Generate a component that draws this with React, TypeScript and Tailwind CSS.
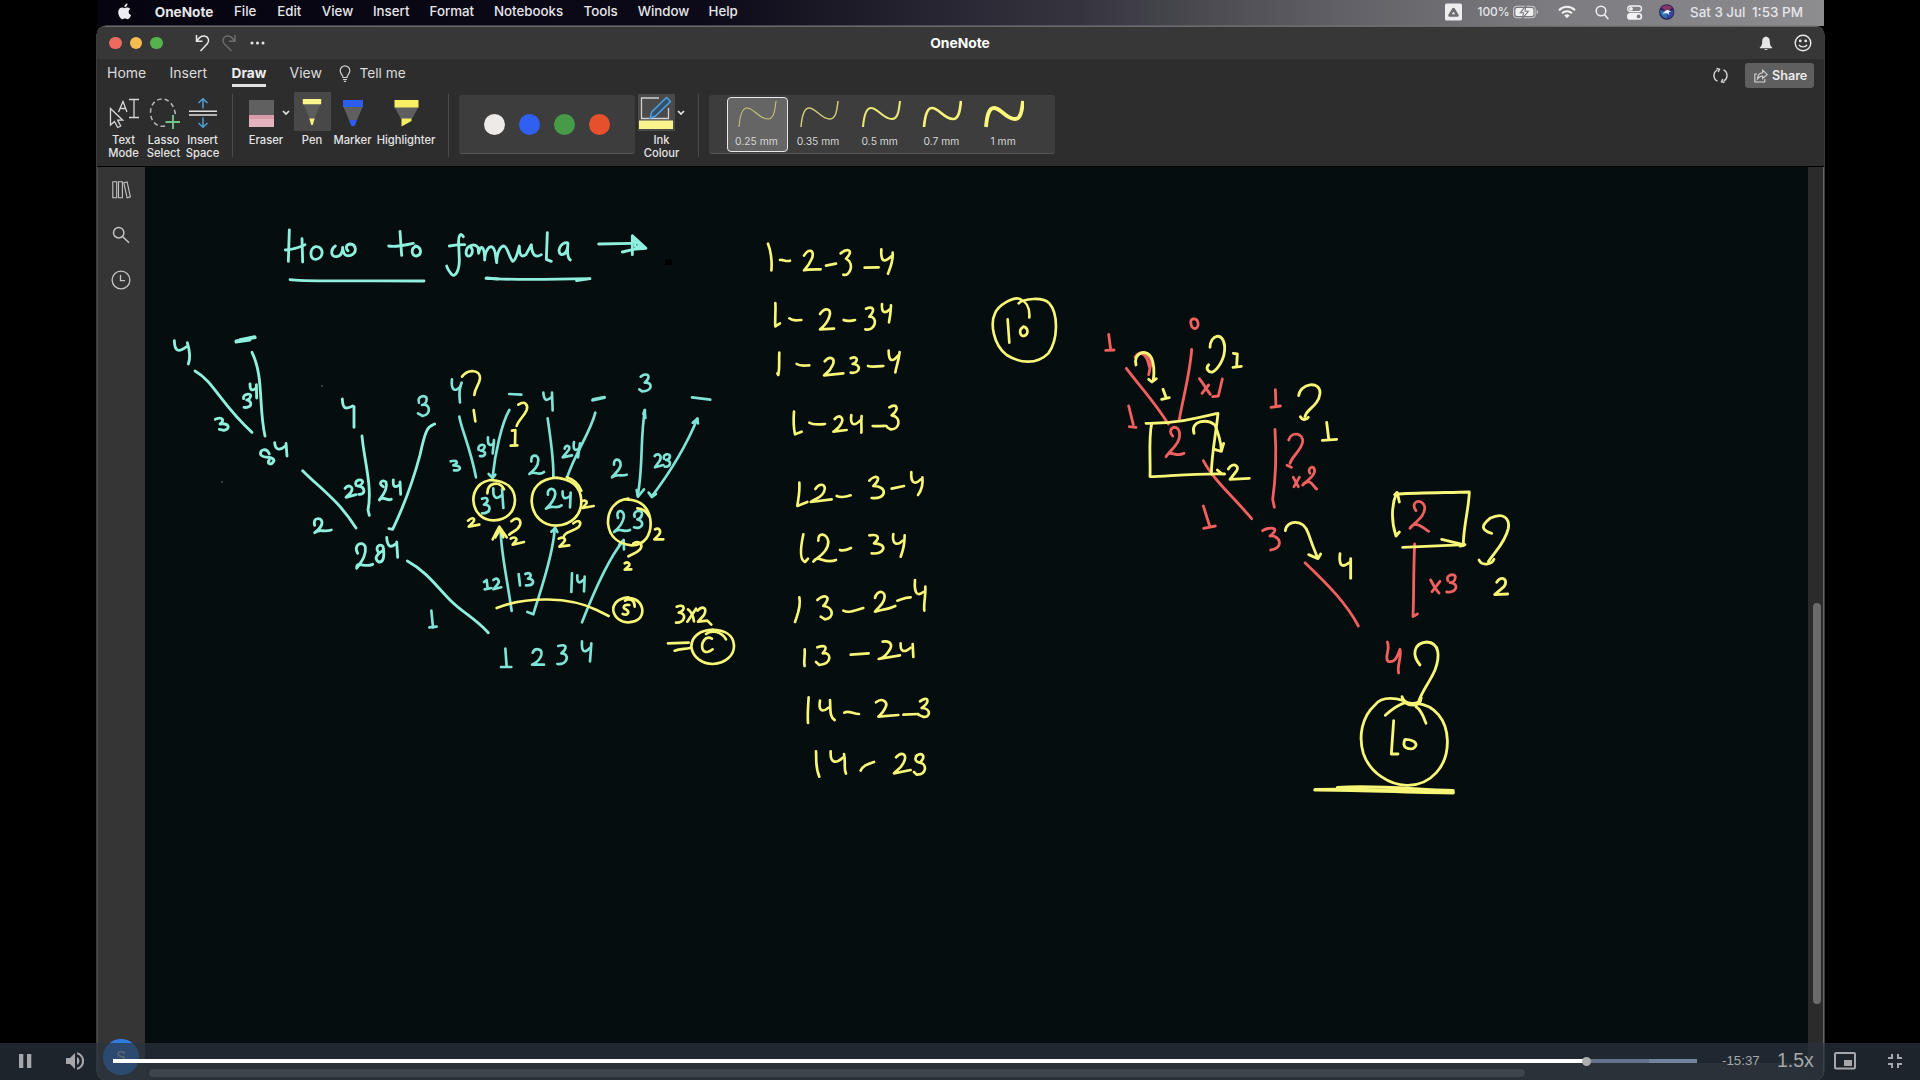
import React from "react";

const MINT = "#8ff0de";
const TEAL = "#7fe3d6";
const YELLOW = "#f8f677";
const RED = "#f0605f";

type InkGroup = { label: string; x: number; y: number; color: string; width: number; d: string[] };

/* Pen strokes of the note, three units to a pixel, grouped by the place where they were written. */
const INK: InkGroup[] = [
  {
    label: "How to formula",
    x: 270, y: 210, color: MINT, width: 8.5,
    d: [
      "M58 60L55 154", "M46 120Q75 118 105 104", "M96 86L98 156",
      "M137 110C118 114 118 150 138 148C160 146 164 112 140 110",
      "M196 108C180 118 182 142 200 140C214 138 218 125 218 112C220 135 228 140 242 136C262 128 260 104 240 102C228 104 226 114 234 122",
      "M390 64L395 136", "M356 108C380 112 410 104 430 100",
      "M436 110C422 115 424 140 440 138C456 135 456 112 436 108",
      "M580 80C572 64 564 80 566 100L568 150C568 180 556 206 544 192C536 182 532 176 530 168", "M538 108C550 106 570 104 584 104",
      "M592 114C584 130 590 144 602 136C612 124 606 110 596 110C606 104 616 102 624 112L626 130C632 100 644 108 644 150C645 118 660 105 668 112C678 120 676 140 680 158C680 130 690 108 702 108C714 112 716 140 728 154C740 150 744 120 748 108C748 140 756 142 768 134L784 104C786 138 798 144 814 134",
      "M832 68L829 148L844 154",
      "M892 98C870 98 860 125 874 134C890 136 894 110 894 100C892 120 892 145 901 150",
      "M986 102L1085 100", "M1087 78L1087 134", "M1088 78L1128 115L1088 118", "M1088 119L1057 126", "M1092 88L1096 110L1116 110L1098 96",
      "M60 209C100 216 200 211 462 213", "M648 205C720 210 860 208 960 206L920 212", "M650 204L684 207",
    ],
  },
  {
    label: "left branch: 4, 3, 34, 2, 234",
    x: 90, y: 160, color: MINT, width: 8.5,
    d: [
      "M253 542C254 575 265 578 290 560", "M292 548C300 575 302 595 295 612",
      "M438 543L496 533", "M438 546L480 540", "M450 539L494 530",
      "M486 577C522 650 505 740 525 828",
      "M315 633C372 665 390 730 486 817",
      "M461 716C456 702 484 698 482 708C480 716 476 720 470 720C490 725 485 745 462 742", "M480 672C480 692 486 694 498 684", "M499 674L500 714",
      "M376 778C398 768 405 782 390 792C415 788 425 805 402 811L388 808",
      "M538 882C530 862 508 868 512 884C520 898 550 885 552 902C545 918 528 912 538 900",
      "M554 848C556 872 570 872 586 858", "M588 850L591 888",
      "M638 932C690 985 745 1020 798 1104",
      "M674 1096C668 1073 692 1070 696 1085C698 1100 685 1110 674 1118C690 1105 700 1118 724 1110",
      "M757 717C758 745 765 750 788 738", "M792 740L792 802",
      "M816 828C822 900 848 980 834 1050L838 1066",
      "M765 985C775 972 795 980 782 998L768 1012L798 1004", "M798 976C790 960 818 954 818 966C816 974 808 978 803 978C827 980 828 1005 806 1003",
      "M880 980C862 972 876 955 888 966C895 985 880 1005 868 1020C880 1005 890 1025 904 1018", "M910 960C908 980 914 984 926 976", "M930 966L932 1003",
      "M897 1106L908 1108C950 1020 970 960 990 885C1008 800 1015 800 1034 792",
      "M803 1180C790 1155 815 1140 826 1160C830 1190 810 1210 800 1225C800 1200 820 1225 848 1213",
      "M864 1175C852 1155 880 1148 880 1165C884 1190 880 1208 866 1206C850 1195 862 1182 878 1172",
      "M890 1132C892 1158 900 1165 915 1153", "M920 1146L923 1192",
      "M952 1203C1010 1235 1040 1280 1080 1320C1120 1360 1150 1370 1195 1418",
    ],
  },
  {
    label: "tree of 1234",
    x: 410, y: 350, color: TEAL, width: 8,
    d: [
      "M27 158C18 138 50 132 50 146C50 158 42 164 36 165C62 158 64 195 38 198L24 190",
      "M126 88C122 118 135 130 152 108", "M155 98C145 120 148 140 150 157",
      "M148 200C155 240 180 290 198 382", "M298 132L334 134", "M298 180C275 220 255 310 248 380", "M236 372L248 384L256 374",
      "M206 299C200 284 226 280 224 291C222 298 216 302 212 302C232 302 228 322 210 318", "M234 262C232 286 240 290 252 280", "M252 270L248 310",
      "M122 334C145 328 145 340 130 346C158 346 154 364 132 361",
      "M400 128C402 150 408 156 424 142", "M426 128L428 181", "M547 151L584 143", "M549 148L583 141",
      "M413 205C422 270 432 330 430 382", "M556 188C540 250 500 300 472 380",
      "M364 334C362 312 385 312 385 330C385 350 370 362 358 372C375 360 385 380 402 366",
      "M464 296C466 283 484 286 476 300L458 322L486 316", "M492 276C488 300 496 305 508 294", "M510 280L504 322",
      "M692 80C710 65 728 78 704 98C730 95 728 125 696 124L688 118", "M846 142L901 149",
      "M705 180C690 260 700 350 683 437", "M700 192L704 180L706 204", "M680 420L684 440L702 418",
      "M848 218L862 206C840 260 800 340 725 440L716 428", "M862 206L864 220", "M726 441L738 432",
      "M612 344C610 322 632 325 632 345C630 360 615 370 606 382C620 370 632 380 650 374",
      "M734 318C745 306 758 318 748 334L735 352L760 345", "M762 326C756 312 782 308 780 320C778 328 772 330 768 330C787 332 782 352 764 350",
      "M216 446C235 438 238 455 222 464C245 462 245 490 216 490", "M250 415C248 445 260 450 275 436", "M276 418L280 474",
      "M414 434C410 412 436 410 436 432C434 450 420 465 408 476C425 462 440 480 455 466", "M458 424C456 445 465 450 480 438", "M482 428L480 472",
      "M624 504C615 480 640 475 642 498C640 520 625 535 612 546C630 530 640 550 660 540", "M674 500C666 482 698 476 696 492C694 504 688 507 682 508C705 512 700 540 672 532",
      "M272 540C272 600 290 680 305 783", "M434 536C430 620 385 740 370 793L352 786", "M424 545L436 534L442 546",
      "M640 572C600 620 550 730 516 817", "M628 584L641 570L642 598",
      "M222 696L230 690L233 716", "M224 718L244 714", "M250 690C262 680 272 692 262 704L250 718L274 712",
      "M326 672L330 706", "M346 672C362 664 368 678 354 686C378 688 372 708 348 706",
      "M486 670L484 726", "M502 676C500 700 508 702 520 690", "M524 680L522 724",
      "M64 782L69 832", "M58 832L80 830", "M286 896L290 950", "M273 951L304 951",
      "M368 908C375 892 398 895 394 915C390 930 375 940 366 944L402 944",
      "M445 888C472 880 472 895 454 910C480 910 474 945 442 942",
      "M516 874C514 905 522 912 540 894", "M544 880L540 934",
    ],
  },
  {
    label: "counts around the tree",
    x: 410, y: 350, color: YELLOW, width: 8,
    d: [
      "M156 80C175 55 212 60 210 85C208 105 194 115 193 135", "M191 180L196 214",
      "M325 164C345 150 355 165 350 180C342 200 325 210 320 228", "M306 242L316 240L315 286", "M302 287L322 286",
      "M250 390C210 390 190 420 190 450C192 490 220 512 252 511C290 510 315 485 315 450C314 415 290 392 240 390", "M232 430C232 398 268 390 282 418",
      "M442 383C390 385 364 415 365 455C368 500 400 527 438 527C485 525 515 495 514 452C512 410 485 385 430 383", "M470 382C490 388 505 400 514 422",
      "M655 446C615 450 593 480 594 520C598 560 625 582 665 586C705 585 722 555 722 520C720 475 695 448 645 448", "M682 475C700 475 710 485 718 500",
      "M174 512C190 498 198 508 188 518L176 530L208 524",
      "M304 514C320 498 335 508 330 525C322 545 308 542 298 554", "M248 568C255 555 262 540 268 530L290 562", "M256 562L270 538L280 562",
      "M302 566C315 558 325 566 316 574L308 584L342 576",
      "M516 453C528 448 535 458 526 464L518 474L551 468",
      "M490 520C508 505 517 518 505 532C490 545 465 545 462 558", "M446 566C462 558 470 568 460 578L448 590L478 586",
      "M735 538C748 530 756 545 745 556L733 568L760 568",
      "M670 580C690 570 700 585 690 598C680 610 665 612 655 619", "M644 640C655 632 664 645 654 650L644 659L664 658",
      "M260 774C350 738 480 740 560 780L596 798",
      "M655 742C620 745 608 765 610 782C615 808 640 818 655 817C685 815 698 800 697 780C694 755 675 742 640 744", "M645 752C660 742 675 752 674 770",
      "M658 765C640 762 636 774 648 778C660 785 655 798 638 792",
      "M800 770C825 760 828 780 806 788C832 788 825 820 798 818", "M834 778C845 785 850 800 852 814", "M858 776L832 815", "M862 782C880 765 892 775 882 795L864 815L892 812L904 824",
      "M774 880L836 878", "M794 902C810 895 825 898 840 894",
      "M915 840C870 838 844 860 844 890C848 925 880 942 908 942C948 940 973 915 972 886C970 855 945 838 900 840", "M888 852C905 838 935 845 948 868",
      "M906 866C885 855 872 880 878 898C885 912 900 905 908 898",
    ],
  },
  {
    label: "1-2-3-4, 1-2-34, 1-23-4, 1-24-3 and 10",
    x: 740, y: 230, color: YELLOW, width: 8,
    d: [
      "M84 41C92 60 97 95 94 121", "M120 90C130 88 138 96 150 92", "M192 77C205 55 225 58 216 85C208 105 198 115 192 121C205 117 225 118 242 118", "M258 107L288 101", "M302 70C325 52 342 62 318 86C345 100 330 140 310 134", "M374 113L416 112", "M424 58C422 92 430 102 455 78", "M458 68C460 95 450 115 444 131",
      "M106 219C108 245 104 265 106 289L120 280", "M148 265C160 275 170 270 184 270", "M240 252C255 230 277 235 268 260C260 285 248 290 240 298L282 296", "M311 270C322 276 334 272 345 270", "M378 236C400 226 407 240 388 260C415 258 408 305 376 298", "M426 222C424 250 435 252 450 238", "M453 226C452 250 450 262 447 277",
      "M118 368C116 395 120 410 115 435L112 430", "M170 402C182 410 195 406 208 406", "M254 394C270 375 287 385 278 405C270 425 258 430 252 436L310 430", "M332 385C355 375 355 395 338 402C365 402 362 432 332 428", "M384 408C395 412 410 410 430 408", "M446 362C446 392 455 400 475 376", "M479 366C475 400 468 410 466 427",
      "M162 545C160 570 160 590 165 613L185 605", "M208 578C220 586 235 584 255 582", "M284 567C298 552 313 562 304 580C298 595 286 600 280 605L320 600", "M334 555C330 582 340 592 360 572", "M365 558C362 580 366 595 364 608", "M398 588C410 590 425 587 440 588", "M448 532C470 518 480 535 455 556C485 560 480 600 452 598L442 592",
      "M836 220C850 205 910 200 928 220C955 250 955 330 925 370C890 405 840 400 800 375C760 345 750 280 765 250C775 225 820 200 838 206C860 215 870 230 868 262",
      "M803 268L808 338", "M848 292C835 300 840 318 852 318C868 312 864 292 850 290",
    ],
  },
  {
    label: "12-3-4, 12-34, 13-2-4, 13-24, 14-2-3, 14-23",
    x: 740, y: 460, color: YELLOW, width: 8,
    d: [
      "M178 68C180 95 175 115 172 138L202 126", "M226 87C240 65 262 75 252 95C245 115 225 115 212 126L275 118", "M290 108C305 114 315 112 332 106", "M388 62C405 42 430 50 400 78C445 78 440 120 395 114", "M455 86L492 78", "M514 36C512 62 520 80 542 58", "M547 52C550 75 545 90 534 105",
      "M190 223C182 260 178 300 195 306L204 296", "M235 242C232 215 262 220 265 245C265 275 235 290 220 305C235 280 250 315 288 300", "M300 270C310 274 320 270 333 264", "M388 226C415 222 422 232 402 250C445 250 435 285 395 280", "M460 222C455 250 470 260 488 242", "M494 226C494 260 488 275 482 290",
      "M178 412C184 440 172 465 165 486", "M232 420C255 400 277 410 250 438C280 440 285 475 255 478L242 470", "M310 452C325 460 345 452 370 444", "M405 414C410 388 442 390 432 420C425 440 410 445 405 455C420 450 445 448 466 438", "M472 422C485 418 495 412 512 412", "M525 360C522 397 530 412 550 396", "M556 380C558 410 550 430 553 452",
      "M194 568C196 590 190 605 194 618", "M232 562C257 553 264 562 248 580C275 575 278 610 238 615L228 606", "M332 584L386 580", "M428 545C450 540 462 555 445 575C435 590 425 595 416 597L480 586", "M482 550C480 575 492 580 512 563", "M518 552L520 591",
      "M206 712C204 740 202 765 204 789", "M240 722C235 750 245 760 265 743", "M270 720C272 750 268 770 284 780", "M313 758C325 750 340 762 357 762", "M408 727C425 712 447 725 435 745C428 760 420 765 415 770L475 765", "M490 764L535 762", "M540 724C565 705 572 725 545 744C575 745 572 775 548 770L535 764",
      "M228 874C230 900 225 920 238 950", "M272 874C270 907 285 914 308 893", "M312 882C318 910 310 925 318 941", "M362 932C370 915 385 912 402 906", "M468 892C485 873 502 882 492 905C485 925 470 930 462 940L512 930", "M528 888C545 874 560 888 540 908C562 912 560 945 530 944L522 936", "M530 888C522 898 528 906 540 908",
    ],
  },
  {
    label: "call tree, upper part",
    x: 1080, y: 300, color: RED, width: 8.5,
    d: [
      "M338 57C328 60 332 85 345 86C360 82 356 54 340 57", "M86 103L92 148", "M77 151L102 150",
      "M139 205C180 260 220 300 265 372", "M335 148C330 220 310 290 298 358", "M165 172C180 148 212 160 213 190L206 224", "M185 160C200 168 204 180 208 200",
      "M146 318L160 374", "M148 380L168 382", "M358 236C370 250 380 270 391 283", "M386 255L366 280", "M427 237L415 288L398 290",
      "M586 269L588 320", "M573 322L601 318", "M626 420C635 392 670 400 668 425C665 450 635 470 630 490", "M621 496L634 502",
      "M585 388C590 470 585 550 578 598L583 622", "M640 532L655 560", "M658 532L642 560",
      "M690 520C680 505 702 492 704 512C705 530 675 545 668 555C690 530 700 560 710 567",
      "M278 408C258 388 290 368 298 395C305 430 270 450 258 470C270 445 285 475 312 460",
      "M370 482C400 540 460 590 515 656", "M370 618L388 675", "M371 685L406 678",
      "M548 692C565 680 607 680 570 708C602 705 612 745 572 750",
    ],
  },
  {
    label: "returned values, upper part",
    x: 1080, y: 300, color: YELLOW, width: 8.5,
    d: [
      "M168 195C158 160 200 142 215 175C225 200 222 225 220 240", "M206 238L216 246L229 236", "M249 268L258 292", "M245 298L268 293",
      "M390 142C390 105 430 92 434 140C436 180 410 210 398 216C385 218 375 205 386 194", "M460 160L472 162L470 196", "M459 202L484 199",
      "M215 370C205 420 212 480 210 530C270 528 350 520 434 522", "M198 370C280 372 350 355 414 340C408 400 395 460 394 522",
      "M342 400C330 362 380 355 405 375C415 400 422 425 424 448", "M403 448L424 454L431 430",
      "M445 507C460 483 482 500 468 515L450 538L508 535", "M412 510L424 520",
      "M656 287C660 250 722 240 720 280C715 320 680 325 675 350", "M661 350C667 362 680 360 685 352", "M740 367L746 416", "M727 421L770 418",
      "M616 692C620 660 670 655 685 700C695 730 705 755 712 772", "M686 764L714 776L722 762",
    ],
  },
  {
    label: "call tree, lower part",
    x: 1280, y: 460, color: RED, width: 8.5,
    d: [
      "M75 308C140 370 200 430 235 498", "M408 152C388 125 425 112 434 140C438 170 400 190 390 205C405 180 425 200 446 214",
      "M404 252C400 330 402 400 399 470L412 462", "M452 360C460 375 468 390 477 399", "M480 364L456 395", "M504 362C494 346 524 338 526 350C526 362 518 368 510 368C540 370 530 400 500 396",
      "M322 546C332 570 312 590 324 604C345 610 352 590 360 568C365 595 350 620 356 639",
    ],
  },
  {
    label: "returned values, lower part",
    x: 1280, y: 460, color: YELLOW, width: 8.5,
    d: [
      "M180 281C176 317 185 325 208 308", "M212 296L212 355",
      "M350 98C332 140 335 190 348 228L358 216", "M344 104L352 98L358 126", "M356 102C420 98 500 98 568 96C566 150 550 200 550 255", "M368 262L555 254", "M540 258L552 256", "M485 238L550 254",
      "M635 220C600 210 605 195 630 175C670 155 690 175 685 205C675 250 640 280 625 305", "M597 300C605 318 635 315 642 298",
      "M650 367C665 343 687 360 672 380L644 404L683 402",
      "M420 615C395 585 400 550 440 546C480 548 480 590 465 630C450 665 425 695 416 725",
      "M366 710C375 735 415 738 424 714", "M368 718C380 740 415 740 422 722",
      "M372 722C330 710 300 715 285 735C245 770 235 830 250 880C270 940 330 975 380 976C450 978 505 920 502 840C500 780 465 735 410 730",
      "M316 766C335 748 355 735 375 728", "M408 740C425 750 430 770 438 790",
      "M341 782L334 882L354 882", "M374 840C366 862 380 868 398 866C415 858 412 840 376 838",
      "M104 990C200 989 400 999 520 999", "M172 982C300 975 400 988 520 991", "M106 988C250 984 400 993 520 996",
    ],
  },
];

const Ink = () => (
  <svg className="block h-full w-full" viewBox="145 167 1663 913" fill="none" strokeLinecap="round" strokeLinejoin="round">
    {INK.map((g) => (
      <g key={g.label} aria-label={g.label} transform={`translate(${g.x} ${g.y}) scale(0.33333)`} stroke={g.color} strokeWidth={g.width}>
        {g.d.map((d) => <path key={d} d={d} />)}
      </g>
    ))}
    <rect x="665" y="259" width="7" height="6" fill="#000" />
    <circle cx="322" cy="386" r="0.8" fill="#6d8c88" />
    <circle cx="222" cy="482" r="0.8" fill="#6d8c88" />
  </svg>
);

const MENUS = [
  { t: "OneNote", c: "w-[79.3px] font-bold text-[13.6px]" },
  { t: "File", c: "w-[43.3px]" },
  { t: "Edit", c: "w-[44.5px]" },
  { t: "View", c: "w-[51.2px]" },
  { t: "Insert", c: "w-[56.6px]" },
  { t: "Format", c: "w-[64.4px]" },
  { t: "Notebooks", c: "w-[89.6px]" },
  { t: "Tools", c: "w-[54.1px]" },
  { t: "Window", c: "w-[70.9px]" },
  { t: "Help", c: "w-[40px]" },
];

const MenuBar = () => (
  <div className="flex h-[26px] items-center whitespace-nowrap bg-[linear-gradient(90deg,#06040f_0%,#0c0a18_35%,#24222e_47%,#36353f_57%,#4a4a50_64%,#606066_72%,#7b7b80_84%,#8d8d90_100%)] pb-[2px] pl-[20px] text-[13.3px] font-medium text-[#e6e6ea]">
    <svg className="-mt-px h-[17px] w-[37.7px] shrink-0" viewBox="0 0 37.7 17" fill="#ececf2">
      <path d="M11.6 9c0-2 1.5-2.900 1.700-3-1-1.400-2.400-1.500-2.900-1.500-1.200-.1-2.300.7-2.900.7s-1.500-.7-2.500-.7C3.700 4.500 2.500 5.300 1.900 6.400.500 8.700 1.500 12.300 2.900 14.200c.7 1 1.500 2.100 2.500 2 1-.04 1.400-.65 2.600-.65s1.600.65 2.600.63c1.100 0 1.800-1 2.400-1.900.8-1.100 1.100-2.200 1.100-2.200s-2.500-.900-2.500-3.080zM9.700 3.100C10.200 2.400 10.600 1.500 10.500.5c-.8 0-1.700.5-2.300 1.200-.500.6-.900 1.500-.800 2.400.900.1 1.800-.400 2.300-1z" />
    </svg>
    {MENUS.map((m) => (
      <span key={m.t} className={"block shrink-0 " + m.c}>{m.t}</span>
    ))}
    <div className="ml-auto mr-px flex h-full items-center">
      <svg className="h-[18px] w-[33px]" viewBox="0 0 33 18">
        <rect width="17" height="17" y=".5" rx="1.500" fill="#ededf0" />
        <path d="M8.500 6L12.500 12.500H4.500Z" fill="none" stroke="#6c6c72" strokeWidth="2.600" strokeLinejoin="round" />
      </svg>
      <span className="block w-[35px] text-[12px] tracking-[-0.1px]">100%</span>
      <svg className="h-[14px] w-[45px]" viewBox="0 0 45 14">
        <rect x=".6" y="1.300" width="21.500" height="11.400" rx="3.200" fill="none" stroke="#c9c9cd" strokeWidth="1.100" />
        <rect x="2.400" y="3.100" width="18" height="7.800" rx="1.600" fill="#f0f0f3" />
        <path d="M23.600 5v4c1-.3 1.500-1 1.500-2s-.5-1.700-1.500-2z" fill="#c9c9cd" />
        <path d="M13 .6L7.300 7.800h3.200L9.500 13.400 15.300 6.300h-3.300z" fill="#f4f4f6" stroke="#77777d" strokeWidth="1.100" />
      </svg>
      <svg className="h-[14px] w-[37px]" viewBox="0 0 37 14" fill="none" stroke="#f2f2f4" strokeWidth="2">
        <path d="M1 5.200C5.500.7 12.500.7 17 5.200M4 8.200c2.800-2.700 7.200-2.700 10 0" /><path d="M9 13.200L6.300 10.500a3.900 3.900 0 0 1 5.400 0z" fill="#f2f2f4" stroke="none" />
      </svg>
      <svg className="h-[15px] w-[32px]" viewBox="0 0 32 15" fill="none" stroke="#f0f0f2" strokeWidth="1.500" strokeLinecap="round"><circle cx="6" cy="6" r="4.800" /><path d="M9.600 9.800L13 13.700" /></svg>
      <svg className="h-[15px] w-[32px]" viewBox="0 0 32 15">
        <rect x=".7" y="1" width="13.800" height="5.600" rx="2.800" fill="none" stroke="#f2f2f4" strokeWidth="1.300" /><circle cx="4" cy="3.800" r="1.900" fill="#f2f2f4" />
        <rect x="0" y="8" width="15.200" height="6.800" rx="3.400" fill="#f2f2f4" /><circle cx="11.600" cy="11.400" r="1.900" fill="#77777c" />
      </svg>
      <svg className="h-[16px] w-[31.5px]" viewBox="0 0 31.500 16">
        <circle cx="7.700" cy="8" r="7.700" fill="#2a2455" />
        <path d="M2.500 3.500C5 .5 11 .5 13 4L8 8z" fill="#8a3568" /><path d="M1 6c0 5 3 8 7 8.500L8 8z" fill="#2a6fb8" /><path d="M14.500 6c.5 5-2 8-6 8.500L8 8z" fill="#3348a0" />
        <path d="M3.500 10.500C6 5.500 9 4.500 12.500 8 10 7.200 9 8.500 10.500 11.500 8 8.500 6 9 3.500 10.500z" fill="#dff3ff" />
      </svg>
      <span className="block w-[62px] text-[13.400px]">Sat 3 Jul</span>
      <span className="block w-[71px] text-[13.500px]">1:53 PM</span>
    </div>
  </div>
);

const TitleBar = () => (
  <div className="flex h-[32px] items-center bg-[#373737]">
    <div className="flex w-[400px] items-center pl-[12px]">
      <div className="flex gap-[8px]">
        <i className="h-[12.500px] w-[12.500px] rounded-full bg-[#ee6a5f]" />
        <i className="h-[12.500px] w-[12.500px] rounded-full bg-[#f5bd4f]" />
        <i className="h-[12.500px] w-[12.500px] rounded-full bg-[#55b24c]" />
      </div>
      <svg className="ml-[32.500px] h-[18px] w-[70px]" viewBox="0 0 70 18" fill="none" strokeWidth="1.500">
        <path d="M1.500 1v6.200h6M1.800 7C4 3.500 6.500 1.500 9.500 2c4 .6 5.200 4.700 3 7.600L5.500 17" stroke="#e8e8e8" />
        <path d="M40 1v6.200h-6M39.700 7C37.500 3.500 35 1.500 32 2c-4 .6-5.200 4.700-3 7.600L36.500 17" stroke="#6c6c6c" />
        <g fill="#e8e8e8"><circle cx="57" cy="9" r="1.500" /><circle cx="62.500" cy="9" r="1.500" /><circle cx="68" cy="9" r="1.500" /></g>
      </svg>
    </div>
    <div className="flex-1 pr-px text-center text-[13.800px] font-bold text-white">OneNote</div>
    <div className="flex w-[400px] items-center justify-end pr-[12px]">
      <svg className="mr-[21.500px] h-[15px] w-[14px]" viewBox="0 0 14 15" fill="#e6e6e6"><path d="M7 .5C4 1 3.200 3 3.200 5.500 3.200 8.500 2.500 10 .8 11.600V12.200H13.200V11.600C11.500 10 10.800 8.500 10.800 5.500 10.800 3 10 1 7 .5zM5.300 13a1.800 1.500 0 0 0 3.400 0z" /></svg>
      <svg className="h-[18px] w-[18px]" viewBox="0 0 18 18" fill="none" stroke="#e8e8e8" strokeWidth="1.400"><circle cx="9" cy="9" r="7.800" /><path d="M5 10.800c1.500 2.800 6.500 2.800 8 0" /><circle cx="6.300" cy="6.900" r=".7" fill="#e8e8e8" /><circle cx="11.700" cy="6.900" r=".7" fill="#e8e8e8" /></svg>
    </div>
  </div>
);

const Tabs = () => (
  <div className="flex h-[33px] items-start whitespace-nowrap pl-[10px] pt-[4px] text-[14px] leading-[20px] text-[#dcdcdc]">
    <span className="block w-[62.500px]">Home</span>
    <span className="block w-[62px]">Insert</span>
    <span className="block w-[34.500px] border-b-[3px] border-[#e2e2e2] pb-px text-[13.700px] font-bold text-[#eee]">Draw</span>
    <span className="ml-[23.500px] block w-[49px]">View</span>
    <svg className="mt-[2px] h-[17px] w-[21px]" viewBox="0 0 21 17" fill="none" stroke="#cfcfcf" strokeWidth="1.200"><path d="M4 12.500C4 10 1.200 9 1.200 5.600a4.800 4.800 0 0 1 9.600 0C10.800 9 8 10 8 12.500zM4 14.500h4M4.800 16.300h2.400" /></svg>
    <span className="block text-[13.700px]">Tell me</span>
    <div className="ml-auto mr-[10px] flex items-center">
      <svg className="mr-[17px] h-[17px] w-[15px]" viewBox="0 0 15 17" fill="none" stroke="#d8d8d8" strokeWidth="1.400"><path d="M4.500 14.200A6.300 6.300 0 0 1 4.300 3M10.500 2.800A6.300 6.300 0 0 1 10.700 14M3.500 1.500l3 .7-1.300 2.800M11.500 15.500l-3-.7 1.300-2.800" /></svg>
      <div className="flex h-[25px] w-[69px] items-center rounded-[3px] bg-[#5f5f5f] pl-[9px] text-[12.600px] font-semibold text-[#ececec]">
        <svg className="mr-[4px] h-[14px] w-[14px]" viewBox="0 0 14 14" fill="none" stroke="#d6d6d6" strokeWidth="1.100"><path d="M3 5H.8v8h10v-3M8.700 1.200v2.600C5.500 4 3.700 6 3.400 10 5 7.800 6.500 7 8.700 7v2.600L13.200 5.400z" /></svg>
        Share
      </div>
    </div>
  </div>
);

const Chevron = () => (
  <svg className="h-[6px] w-[8px]" viewBox="0 0 8 6" fill="none" stroke="#e4e4e4" strokeWidth="1.700"><path d="M1 1l3 3 3-3" /></svg>
);

const Tool = ({ c, label, children }: { c: string; label: React.ReactNode; children: React.ReactNode }) => (
  <div className={"flex shrink-0 flex-col items-center " + c}>
    <div className="flex h-[42px] items-center justify-center">{children}</div>
    <div className="whitespace-nowrap text-center text-[11.200px] font-medium leading-[12.800px] text-[#e4e4e4]">{label}</div>
  </div>
);

const WIDTHS = [
  { t: "0.25 mm", w: 1.1, c: "#c8c47a", box: "border-[1.500px] border-[#e8e8e8] bg-[#656565]" },
  { t: "0.35 mm", w: 1.5, c: "#cfcb76", box: "border-[1.500px] border-transparent" },
  { t: "0.5 mm", w: 2.1, c: "#eae678", box: "border-[1.500px] border-transparent" },
  { t: "0.7 mm", w: 2.7, c: "#f7f37a", box: "border-[1.500px] border-transparent" },
  { t: "1 mm", w: 3.8, c: "#fbf77c", box: "border-[1.500px] border-transparent" },
];

const Ribbon = () => (
  <div className="flex h-[74px] items-start">
    <Tool c="w-[44px] ml-[4.500px]" label={<>Text<br />Mode</>}>
      <svg className="h-[32px] w-[32px]" viewBox="0 0 32 32" fill="none" stroke="#d8d8d8" strokeWidth="1.300">
        <path d="M2.500 11.500V28l4-3.500 3.200 6 3-1.500-3-5.800h5z" /><path d="M10.500 15L15 4.500l4 10.500M12 11.500h6M21 2.500h10M26 2.500v18M21 20.500h10" />
      </svg>
    </Tool>
    <Tool c="w-[36px]" label={<>Lasso<br />Select</>}>
      <svg className="h-[32px] w-[32px]" viewBox="0 0 32 32" fill="none" strokeWidth="1.500"><path d="M17 29C9 31 2.500 24 2.500 15.500S8 2 14.500 2 26 8 27.500 17.500" stroke="#b8b8b8" strokeDasharray="4.500 3" /><path d="M25 18v14M17.500 25h15" stroke="#6fc48a" strokeWidth="1.900" /></svg>
    </Tool>
    <Tool c="w-[42px]" label={<>Insert<br />Space</>}>
      <svg className="h-[32px] w-[28px]" viewBox="0 0 28 32" fill="none" strokeWidth="1.500"><path d="M0 14.300h28M0 17.900h28" stroke="#e0e0e0" /><path d="M14 11.500V2M9.500 6L14 1.800 18.500 6M14 20.500V30M9.500 26l4.500 4.200 4.500-4.200" stroke="#4fa0d8" /></svg>
    </Tool>
    <div className="ml-[8.500px] mt-[2px] h-[63px] w-px bg-[#4a4a4a]" />
    <Tool c="w-[46px] ml-[10px]" label="Eraser">
      <div className="mr-[9px] h-[27px] w-[25px] bg-[linear-gradient(#606060_55%,#d99aaa_55%,#d99aaa_70%,#e3b3bf_70%)]" />
    </Tool>
    <div className="-ml-[7px] mt-[18px] w-[11px]"><Chevron /></div>
    <Tool c="w-[38px]" label="Pen">
      <div className="-mt-[3px] flex h-[39px] w-[37px] items-center justify-center bg-[#484848]">
        <svg className="h-[28px] w-[20px]" viewBox="0 0 20 28"><path d="M1.500 6h17L12.500 21h-5z" fill="#5c5c5c" /><path d="M.8 1h18.400v5.200H.8z" fill="#f9f58a" /><path d="M7.300 20.500h5.400L10.800 27H9.200z" fill="#f5f17a" /></svg>
      </div>
    </Tool>
    <Tool c="w-[43px]" label="Marker">
      <svg className="h-[28px] w-[20px]" viewBox="0 0 20 28"><path d="M0 7h20L14 21H6z" fill="#5f5f5f" /><path d="M0 1h20v7H0z" fill="#2b5df0" /><path d="M6 21h8l-2 5.500-2 1-2-1z" fill="#2b5df0" /></svg>
    </Tool>
    <Tool c="w-[64px]" label="Highlighter">
      <svg className="h-[28px] w-[25px]" viewBox="0 0 25 28"><path d="M.5 8h24l-6.500 12h-11z" fill="#5f5f5f" /><path d="M.5 1h24v7.500H.5z" fill="#f8f063" /><path d="M7.500 19.500h10V22l-10 5.500z" fill="#f5ed62" /></svg>
    </Tool>
    <div className="ml-[10px] mt-[2px] h-[63px] w-px bg-[#4a4a4a]" />
    <div className="ml-[10px] mt-[3px] flex h-[59px] w-[176px] items-center justify-center gap-[14px] rounded-[3px] border-b border-[#555] bg-[#3d3d3d]">
      <i className="h-[21px] w-[21px] rounded-full bg-[#ecebea]" />
      <i className="h-[21px] w-[21px] rounded-full bg-[#2f60f2]" />
      <i className="h-[21px] w-[21px] rounded-full bg-[#479a48]" />
      <i className="h-[21px] w-[21px] rounded-full bg-[#e6502d]" />
    </div>
    <Tool c="w-[53px]" label={<>Ink<br />Colour</>}>
      <div className="-mt-[1px] mr-[11px] flex h-[37px] w-[37px] flex-col items-center justify-end bg-[#4a4a4a] pb-[2px]">
        <svg className="h-[33px] w-[34px]" viewBox="0 0 34 33"><path d="M20 2H2.500v20.500H29.500V12" fill="none" stroke="#d0d0d0" strokeWidth="1.300" /><path d="M27.500 1.500l4 4L16.500 20l-5.500 2 1.800-6z" fill="#31506b" stroke="#4fa0e0" strokeWidth="1.500" /><path d="M0 24.500h34V33H0z" fill="#f8f48b" /></svg>
      </div>
    </Tool>
    <div className="-ml-[11.500px] mt-[18px] w-[21px]"><Chevron /></div>
    <div className="mt-[2px] h-[63px] w-px bg-[#4a4a4a]" />
    <div className="ml-[10px] mt-[3px] flex h-[59px] w-[346px] rounded-[3px] border-b border-[#555] bg-[#3d3d3d] pl-[18px] pt-[2px]">
      {WIDTHS.map((s) => (
        <div key={s.t} className={"flex h-[55px] w-[61.700px] shrink-0 flex-col items-center rounded-[4px] pt-[2px] " + s.box}>
          <svg className="h-[28px] w-[40px]" viewBox="0 0 40 28" fill="none" stroke={s.c} strokeWidth={s.w}><path d="M2 27C3 15 5 8 10 8C17 8 22 19 31 19C37 19 38 10 39 1" /></svg>
          <span className="mr-[2px] mt-[7px] text-[10.300px] leading-[13px] text-[#d6d6d6]">{s.t}</span>
        </div>
      ))}
    </div>
  </div>
);

const SideRail = () => (
  <div className="flex w-[48px] shrink-0 flex-col items-center border-l border-[#4a4a4a] bg-[#353535] pr-px pt-[13.500px]">
    <svg className="h-[18px] w-[19px]" viewBox="0 0 19 18" fill="none" stroke="#c4c4c4" strokeWidth="1.100"><path d="M.8.8h3.900v16H.8zM6.500.8h3.900v16H6.500zM11.800 1.800l3.300-.9 3.300 15-3.300.9z" /></svg>
    <svg className="mt-[27px] h-[18px] w-[18px]" viewBox="0 0 18 18" fill="none" stroke="#c4c4c4" strokeWidth="1.500"><circle cx="6.700" cy="6.700" r="5.200" /><path d="M10.500 10.500l6.500 6.300" /></svg>
    <svg className="mt-[26px] h-[20px] w-[20px]" viewBox="0 0 20 20" fill="none" stroke="#c4c4c4" strokeWidth="1.300"><circle cx="10" cy="10" r="8.900" /><path d="M9.500 4.800v5.800h4.500" /></svg>
    <div className="mt-auto mb-[5px] flex h-[36px] w-[36px] items-center justify-center rounded-full bg-[#2f7de0] text-[15px] text-[#dfe8f5]">S</div>
  </div>
);

const Player = () => (
  <div className="absolute inset-x-0 bottom-0 flex h-[37px] items-center bg-[#2b333f]/70 pb-px font-['Liberation_Sans',Arial,sans-serif] text-[#a5a7aa]">
    <svg className="ml-[19px] h-[14px] w-[13px]" viewBox="0 0 13 14" fill="#a5a7aa"><path d="M0 0h4.300v14H0zM8 0h4.300v14H8z" /></svg>
    <svg className="ml-[34px] h-[18px] w-[18px]" viewBox="0 0 18 18" fill="#a5a7aa"><path d="M0 6v6h4l5 5V1L4 6zM13.500 9A4.500 4.500 0 0 0 11 5v8.100A4.500 4.500 0 0 0 13.500 9zM11 .2v2.100a7 7 0 0 1 0 13.400v2.100A9 9 0 0 0 11 .2z" /></svg>
    <div className="ml-[29px] flex h-[9px] w-[1584px] items-center">
      <div className="h-[4px] w-[1473px] bg-white" />
      <div className="relative h-[4px] w-[63px] bg-[#66718c]"><i className="absolute -left-[4.500px] -top-[2.500px] h-[9px] w-[9px] rounded-full bg-[#aeaeae]" /></div>
      <div className="h-[4px] w-[48px] bg-[#71839f]" />
    </div>
    <span className="ml-[25px] block w-[55px] text-[13.300px]">-15:37</span>
    <span className="block w-[57px] text-[19.500px]">1.5x</span>
    <svg className="h-[18px] w-[22px]" viewBox="0 0 22 18"><rect x="1" y="1" width="20" height="15.500" rx="1" fill="none" stroke="#a5a7aa" strokeWidth="2" /><path d="M10 8h8v6h-8z" fill="#a5a7aa" /></svg>
    <svg className="ml-[32px] h-[14px] w-[14px]" viewBox="0 0 14 14" fill="none" stroke="#a5a7aa" strokeWidth="2"><path d="M0 4h4V0M10 0v4h4M0 10h4v4M14 10h-4v4" /></svg>
  </div>
);

export default function App() {
  return (
    <div className="relative h-[1080px] w-[1920px] overflow-hidden bg-black font-['Inter','Liberation_Sans',sans-serif]">
      <div className="ml-[97px] flex h-[1080px] w-[1727px] flex-col">
        <MenuBar />
        <div className="flex min-h-0 flex-1 flex-col overflow-hidden rounded-t-[9px] rounded-b-[9px] bg-[#2d2d2d] shadow-[0_0_0_0.500px_#777]">
          <div className="border-t border-[#6a6a6a] bg-[#2d2d2d]">
            <TitleBar />
            <Tabs />
            <Ribbon />
          </div>
          <div className="flex min-h-0 flex-1 border-t border-black">
            <SideRail />
            <div className="min-w-0 flex-1 bg-[linear-gradient(#050d0e_896px,#2d2d2d_896px)]"><Ink /></div>
            <div className="flex w-[16px] shrink-0 flex-col border-r border-[#666] bg-[#2b2b2b] pl-[4.500px] pt-[436px]">
              <div className="h-[401px] w-[8.500px] rounded-full bg-[#6b6b6b]" />
            </div>
          </div>
          <div className="-mt-[11px] mb-[3px] ml-[52px] h-[8px] w-[1376px] shrink-0 rounded-full bg-[#6b6b6b]" />
        </div>
      </div>
      <Player />
    </div>
  );
}
